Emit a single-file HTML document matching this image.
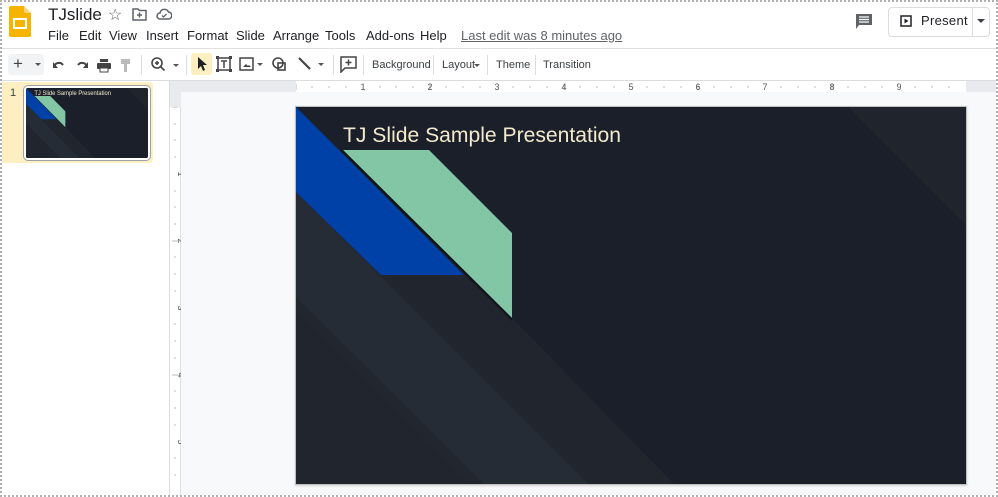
<!DOCTYPE html>
<html><head><meta charset="utf-8">
<style>
*{box-sizing:border-box;margin:0;padding:0}
body{width:998px;height:497px;overflow:hidden;background:#fff;font-family:"Liberation Sans",Arial,sans-serif;position:relative;color:#202124}
.frame{position:absolute;left:0;top:0;width:998px;height:497px;border:2px dotted #b0b0b0;pointer-events:none;z-index:10}
.abs{position:absolute}
.menu span{position:absolute;top:28px;font-size:13px;color:#202124}
.tb{position:absolute;top:48px;left:2px;right:2px;height:33px;border-top:1px solid #e0e0e0;border-bottom:1px solid #dadce0}
.tbt{position:absolute;top:59px;font-size:11px;color:#3c4043}
.sep{position:absolute;top:55px;width:1px;height:20px;background:#dadce0}
.ic{position:absolute;top:56px}
</style></head><body>
<div class="frame"></div>
<svg class="abs" style="left:9px;top:6px" width="22" height="31" viewBox="0 0 22 31">
<path d="M2 0h13l7 7v22a2 2 0 0 1-2 2H2a2 2 0 0 1-2-2V2a2 2 0 0 1 2-2z" fill="#f4b400"/>
<path d="M15 0l7 7h-5a2 2 0 0 1-2-2z" fill="#f8d57a"/>
<rect x="5" y="13" width="12" height="9" fill="none" stroke="#fff" stroke-width="2"/>
</svg>
<div class="abs" style="left:48px;top:5px;font-size:17px;color:#202124">TJslide</div>
<div class="abs" style="left:108px;top:5px;font-size:16px;color:#5f6368">☆</div>
<svg class="abs" style="left:132px;top:8px" width="15" height="13" viewBox="0 0 15 13"><path d="M1 1h5l1.5 1.5H14V12H1z" fill="none" stroke="#5f6368" stroke-width="1.5"/><path d="M7.5 4.5v5M5 7h5" stroke="#5f6368" stroke-width="1.5"/></svg>
<svg class="abs" style="left:156px;top:8px" width="16" height="12" viewBox="0 0 16 12"><path d="M4 11a3 3 0 0 1 0-6 4.5 4.5 0 0 1 8.5-1A3.5 3.5 0 0 1 12 11z" fill="none" stroke="#5f6368" stroke-width="1.5"/><path d="M6 7.5l1.5 1.5 3-3" fill="none" stroke="#5f6368" stroke-width="1.3"/></svg>
<div class="menu">
<span style="left:48px">File</span><span style="left:79px">Edit</span><span style="left:109px">View</span><span style="left:146px">Insert</span><span style="left:187px">Format</span><span style="left:236px">Slide</span><span style="left:273px">Arrange</span><span style="left:325px">Tools</span><span style="left:366px">Add-ons</span><span style="left:420px">Help</span>
<span style="left:461px;color:#5f6368;text-decoration:underline">Last edit was 8 minutes ago</span>
</div>
<svg class="abs" style="left:855px;top:13px" width="18" height="17" viewBox="0 0 18 17"><path d="M1 1h16v11H4l-3 4z" fill="#5f6368"/><path d="M4 4h10M4 6.5h10M4 9h10" stroke="#fff" stroke-width="1.2"/></svg>
<div class="abs" style="left:888px;top:7px;width:102px;height:30px;border:1px solid #dadce0;border-radius:4px"></div>
<div class="abs" style="left:972px;top:8px;width:1px;height:28px;background:#dadce0"></div>
<svg class="abs" style="left:900px;top:15px" width="12" height="12" viewBox="0 0 12 12"><rect x="1" y="1" width="10" height="10" fill="none" stroke="#202124" stroke-width="1.5"/><path d="M4.5 3.5v5l4-2.5z" fill="#202124"/></svg>
<div class="abs" style="left:921px;top:13px;font-size:13px;color:#202124;letter-spacing:.3px">Present</div>
<div class="abs" style="left:977px;top:19px;border-left:4px solid transparent;border-right:4px solid transparent;border-top:4px solid #3c4043"></div>
<div class="tb"></div>
<div class="abs" style="left:8px;top:54px;width:36px;height:21px;background:#f1f3f4;border-radius:3px"></div>
<div class="abs" style="left:13px;top:54px;font-size:17px;color:#444">+</div>
<div class="abs" style="left:35px;top:63px;border-left:3px solid transparent;border-right:3px solid transparent;border-top:3px solid #555"></div>
<svg class="ic" style="left:51px" width="80" height="18" viewBox="0 0 80 18">
<path d="M3 11a5 5 0 0 1 9-2" fill="none" stroke="#444" stroke-width="2"/><path d="M2 6v6h5z" fill="#444"/>
<path d="M36 11a5 5 0 0 0-9-2" fill="none" stroke="#444" stroke-width="2"/><path d="M37 6v6h-5z" fill="#444"/>
<rect x="46" y="7" width="14" height="6" rx="1" fill="#444"/><rect x="49" y="3" width="8" height="3" fill="#444"/><rect x="49" y="12" width="8" height="4" fill="#fff" stroke="#444"/>
<rect x="70" y="3" width="9" height="5" fill="#bbb"/><rect x="73" y="8" width="3" height="8" fill="#bbb"/>
</svg>
<div class="sep" style="left:141px"></div>
<svg class="ic" style="left:150px" width="30" height="18" viewBox="0 0 30 18"><circle cx="7" cy="7" r="5" fill="none" stroke="#444" stroke-width="1.6"/><path d="M10.5 10.5l4 4M5 7h4M7 5v4" stroke="#444" stroke-width="1.6"/><path d="M23 8h6l-3 3z" fill="#555"/></svg>
<div class="sep" style="left:186px"></div>
<div class="abs" style="left:191px;top:53px;width:21px;height:22px;background:#feefc3;border-radius:3px"></div>
<svg class="ic" style="left:195px" width="14" height="16" viewBox="0 0 14 16"><path d="M3 1v12l3-3 2 5 2-1-2-5h4z" fill="#202124"/></svg>
<svg class="ic" style="left:216px" width="16" height="16" viewBox="0 0 16 16"><rect x="2" y="2" width="12" height="12" fill="none" stroke="#444" stroke-width="1.5"/><path d="M5 5h6M8 5v7" stroke="#444" stroke-width="1.5"/><path d="M0 0h3v3H0zM13 0h3v3h-3zM0 13h3v3H0zM13 13h3v3h-3z" fill="#444"/></svg>
<svg class="ic" style="left:239px" width="26" height="16" viewBox="0 0 26 16"><rect x="1" y="2" width="13" height="12" fill="none" stroke="#444" stroke-width="1.5"/><path d="M4 11l3-3 2 2 1-1 2 2z" fill="#444"/><path d="M18 7h6l-3 3z" fill="#555"/></svg>
<svg class="ic" style="left:271px" width="17" height="16" viewBox="0 0 17 16"><circle cx="7" cy="7" r="5" fill="none" stroke="#444" stroke-width="1.6"/><rect x="7" y="7" width="7" height="7" fill="none" stroke="#444" stroke-width="1.6"/></svg>
<svg class="ic" style="left:297px" width="32" height="16" viewBox="0 0 32 16"><path d="M2 2l11 11" stroke="#444" stroke-width="2.2"/><path d="M21 7h6l-3 3z" fill="#555"/></svg>
<div class="sep" style="left:333px"></div>
<svg class="ic" style="left:340px" width="17" height="17" viewBox="0 0 17 17"><path d="M1 1h15v11H5l-4 4z" fill="none" stroke="#444" stroke-width="1.5"/><path d="M8.5 3.5v6M5.5 6.5h6" stroke="#444" stroke-width="1.5"/></svg>
<div class="sep" style="left:363px"></div>
<div class="tbt" style="left:372px">Background</div>
<div class="sep" style="left:433px"></div>
<div class="tbt" style="left:442px">Layout</div>
<div class="abs" style="left:474px;top:64px;border-left:3px solid transparent;border-right:3px solid transparent;border-top:3px solid #555"></div>
<div class="sep" style="left:487px"></div>
<div class="tbt" style="left:496px">Theme</div>
<div class="sep" style="left:535px"></div>
<div class="tbt" style="left:543px">Transition</div>
<div class="abs" style="left:2px;top:82px;width:151px;height:81px;background:#feefc3;border-radius:0 4px 4px 0"></div>
<div class="abs" style="left:10px;top:87px;font-size:11px;color:#3c4043">1</div>
<div class="abs" style="left:24px;top:86px;width:126px;height:74px;border:2px solid #fff;box-shadow:0 0 0 1px #9aa0a6;border-radius:4px;overflow:hidden;background:#1a1f2a">
<svg width="122" height="70" viewBox="0 0 670 377" preserveAspectRatio="none" style="display:block">
<rect width="670" height="377" fill="#1a1f2a"/>
<polygon points="552,0 670,0 670,118" fill="#1f242d"/>
<polygon points="0,85 168,168 216,211 378,377 0,377" fill="#20252e"/>
<polygon points="0,85 292,377 188,377 0,190" fill="#262c36"/>
<polygon points="0,190 188,377 173,377 0,206" fill="#21262f"/>
<polygon points="0,0 168,168 85,168 0,85" fill="#0041a8"/>
<polygon points="47,43 133,43 216,126 216,211" fill="#82c6a6"/>
<text x="46" y="38" font-family="Liberation Sans,sans-serif" font-size="32" fill="#f3e9cc">TJ Slide Sample Presentation</text>
</svg></div>
<div class="abs" style="left:169px;top:81px;width:1px;height:416px;background:#dadce0"></div>
<div class="abs" style="left:170px;top:81px;width:826px;height:414px;background:#f8f9fa"></div>
<div class="abs" style="left:170px;top:81px;width:826px;height:11px;background:#e8eaed"></div>
<div class="abs" style="left:296px;top:81px;width:670px;height:11px;background:#fff"></div>
<div class="abs" style="left:170px;top:92px;width:11px;height:403px;background:#fff;border-right:1px solid #e0e0e0"></div>
<div class="abs" style="left:170px;top:92px;width:11px;height:15px;background:#e8eaed"></div>
<svg class="abs" style="left:296px;top:81px" width="670" height="11">
<g stroke="#bbb" stroke-width="1">
<path d="M16 5v2M33 5v2M50 5v2M84 5v2M100 5v2M117 5v2M150 5v2M167 5v2M184 5v2M217 5v2M234 5v2M251 5v2M284 5v2M301 5v2M318 5v2M351 5v2M368 5v2M385 5v2M418 5v2M435 5v2M452 5v2M485 5v2M502 5v2M519 5v2M552 5v2M569 5v2M586 5v2M619 5v2M636 5v2M653 5v2"/>
<path d="M0 3v6M134 3v6M268 3v6M402 3v6M536 3v6"/></g>
<g font-family="Liberation Sans,sans-serif" font-size="9" fill="#555" text-anchor="middle">
<text x="67" y="9">1</text><text x="134" y="9">2</text><text x="201" y="9">3</text><text x="268" y="9">4</text><text x="335" y="9">5</text><text x="402" y="9">6</text><text x="469" y="9">7</text><text x="536" y="9">8</text><text x="603" y="9">9</text></g>
</svg>
<svg class="abs" style="left:170px;top:107px" width="11" height="377">
<g stroke="#bbb"><path d="M4 17h2M4 33h2M4 50h2M4 84h2M4 100h2M4 117h2M4 150h2M4 167h2M4 184h2M4 217h2M4 234h2M4 251h2M4 284h2M4 301h2M4 318h2M4 351h2M4 368h2"/><path d="M2 0h6M2 134h6M2 268h6"/></g>
<g font-family="Liberation Sans,sans-serif" font-size="9" fill="#555" text-anchor="middle">
<text transform="translate(8,67) rotate(90)">1</text><text transform="translate(8,134) rotate(90)">2</text><text transform="translate(8,201) rotate(90)">3</text><text transform="translate(8,268) rotate(90)">4</text><text transform="translate(8,335) rotate(90)">5</text></g>
</svg>
<div class="abs" style="left:295px;top:106px;width:672px;height:379px;border:1px solid #c0c0c0;box-shadow:0 1px 2px rgba(0,0,0,.15)"></div>
<svg class="abs" style="left:296px;top:107px" width="670" height="377" viewBox="0 0 670 377">
<rect width="670" height="377" fill="#1a1f2a"/>
<polygon points="552,0 670,0 670,118" fill="#1f242d"/>
<polygon points="0,85 168,168 216,211 378,377 0,377" fill="#20252e"/>
<polygon points="0,85 292,377 188,377 0,190" fill="#262c36"/>
<polygon points="0,190 188,377 173,377 0,206" fill="#21262f"/>
<polygon points="0,0 168,168 85,168 0,85" fill="#0041a8"/>
<polygon points="47,43 133,43 216,126 216,211" fill="#82c6a6"/>
<polygon points="47,43 216,211 216,214 44,43" fill="#10141b"/>
<text x="47" y="35" font-family="Liberation Sans,sans-serif" font-size="21.5" fill="#f3e9cc" textLength="278" lengthAdjust="spacingAndGlyphs">TJ Slide Sample Presentation</text>
</svg>
</body></html>
